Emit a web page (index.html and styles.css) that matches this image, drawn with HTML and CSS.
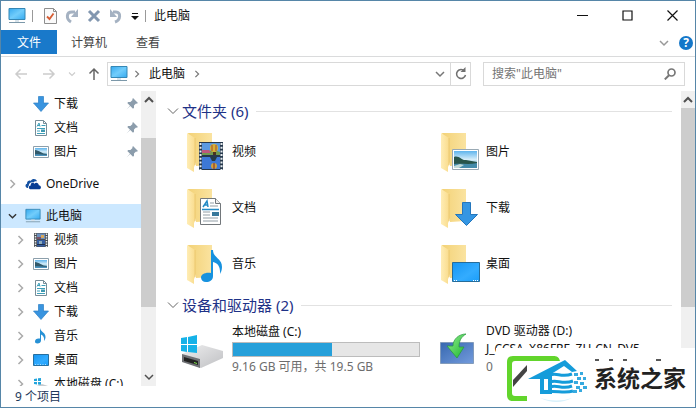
FILE: index.html
```html
<!DOCTYPE html>
<html lang="zh-CN">
<head>
<meta charset="utf-8">
<title>此电脑</title>
<link rel="stylesheet" href="styles.css">
</head>
<body>
<svg class="defs" aria-hidden="true">
  <defs>
    <linearGradient id="screen" x1="0" y1="0" x2="1" y2="1"><stop offset="0" stop-color="#35a9ef"/><stop offset=".5" stop-color="#72cdfb"/><stop offset="1" stop-color="#35aaf0"/></linearGradient>
    <linearGradient id="desk" x1="0" y1="0" x2="1" y2="1"><stop offset="0" stop-color="#1596f3"/><stop offset=".6" stop-color="#33acff"/><stop offset="1" stop-color="#1a9dfa"/></linearGradient>
    <linearGradient id="fold" x1="0" y1="0" x2="1" y2="0"><stop offset="0" stop-color="#f3d277"/><stop offset="1" stop-color="#fae3a0"/></linearGradient>
    <linearGradient id="flap" x1="0" y1="0" x2="1" y2="0"><stop offset="0" stop-color="#ffedb5"/><stop offset="1" stop-color="#f9dc8d"/></linearGradient>
    <linearGradient id="sky" x1="0" y1="0" x2="0" y2="1"><stop offset="0" stop-color="#5fb4ec"/><stop offset=".5" stop-color="#d5edf9"/><stop offset="1" stop-color="#3d94b8"/></linearGradient>
    <linearGradient id="disc" x1="0" y1="0" x2="1" y2="1"><stop offset="0" stop-color="#3768b0"/><stop offset="1" stop-color="#739bdc"/></linearGradient>
    <linearGradient id="green" x1="0" y1="0" x2="1" y2="1"><stop offset="0" stop-color="#98ee91"/><stop offset="1" stop-color="#18b62d"/></linearGradient>
    <linearGradient id="metal" x1="0" y1="0" x2="1" y2="1"><stop offset="0" stop-color="#eeeeef"/><stop offset="1" stop-color="#bfc0c3"/></linearGradient>
  </defs>
  <symbol id="pc" viewBox="0 0 18 16"><path d="M1 .5h16v11H1z" fill="url(#screen)" stroke="#3587b5"/><path d="M7 12h4v2H7z" fill="#d7e3eb"/><path d="M1 14.5h16" stroke="#7c98a9"/></symbol>
  <symbol id="down" viewBox="0 0 16 16"><path d="M5.5.5h5V7h5L8 15.5.5 7h5z" fill="#3994df" stroke="#2b7fc6" stroke-width=".7"/></symbol>
  <symbol id="doc" viewBox="0 0 16 16"><path d="M2.5.5h8l3 3v12h-11z" fill="#fff" stroke="#778d98"/><path d="M10.5.5v3h3" fill="none" stroke="#778d98"/><path d="M4 6.5L6 3l1 3.500M4.500 5.500H7M8.500 5.500h4M4 8.500h8M4 11h3M4 13.500h8" fill="none" stroke="#3d9fba"/><path d="M8 9.500h4v2.500H8z" fill="#3f98b0"/></symbol>
  <symbol id="pic" viewBox="0 0 16 16"><path d="M.5 2.500h15v11H.5z" fill="#fff" stroke="#8c9fab"/><path d="M2 4h12v8H2z" fill="url(#sky)"/><path d="M2 6c4 0 7 4 12 4v2H2z" fill="#31596a"/><path d="M2 10.500c4-1 8 1 12 0V12H2z" fill="#4a92bd"/></symbol>
  <symbol id="film" viewBox="0 0 16 16"><path d="M1 1h14v14H1z" fill="#4b4f55"/><path d="M4 1.500h8V7H4z" fill="#6c8fbd"/><path d="M4 8h8v6.500H4z" fill="#355da0"/><path d="M2.500 1.500v14M13.500 1.500v14" stroke="#e6eaec" stroke-width="1.500" stroke-dasharray="1.500 1"/><path d="M8 3h3v3H8z" fill="#d6a85d"/><path d="M4 5h4v2H4z" fill="#7c5267"/><path d="M6 9h3v3H6z" fill="#8babbd"/><path d="M4 12h8v1H4z" fill="#1c304f"/></symbol>
  <symbol id="note" viewBox="0 0 16 16"><path d="M7 0c.5 4 6 4.500 5.500 9.500-.2 1.500-.7 2.500-1.500 3.500.6-3-.5-5.500-3-6.500v6c0 2-1.600 3-3.500 3S2 14.500 2 13.200s1.500-2.700 3.500-2.700H7z" fill="#2791d5"/></symbol>
  <symbol id="desktop" viewBox="0 0 16 16"><path d="M.5 2.500h15v11H.5z" fill="url(#desk)" stroke="#276f9f"/><path d="M2 12.500h12" stroke="#a8dcff" stroke-dasharray="1 1.500"/></symbol>
  <symbol id="cloud" viewBox="0 0 18 14"><path d="M3.500 11.500H3C.2 11.500-.4 7.500 2.300 6.700 2 3.700 5 2.500 6.500 3.500 8 .5 12.500.5 13.500 4c-1.500-.5-3-.1-4 1.200C6.500 4.200 3.900 6.500 4.300 9c-.8.6-1.100 1.500-.8 2.500z" fill="#1451a2"/><path d="M7 13c-3.500 0-3.500-4-.6-4.200C6 5.500 9.500 4.800 10.500 6.700c2-2.200 5.100-.7 5 1.800C19 9 18.500 13 15.500 13z" fill="#073d94"/></symbol>
  <symbol id="win-disk" viewBox="0 0 16 16"><path d="M1 3l3-.5V5H1zM5 2.300L8 2v3H5zM1 6h3v2.500L1 8zM5 6h3v3l-3-.4z" fill="#24a5dc"/><path d="M1 11l8-3 6 2v4l-7 2-7-3z" fill="#c7cbcf"/></symbol>
  <symbol id="pin" viewBox="0 0 12 12"><path d="M7 0l5 5-1.300.7-.7-.2L8 7.600v2.200l-1 .9L4.300 8 .5 11.500 4 7.700 1.300 5l.9-1h2.200l2.100-2-.2-.7z" fill="#8c9dac"/></symbol>
  <symbol id="right" viewBox="0 0 8 10"><path d="M2 1l4 4-4 4" fill="none" stroke="currentColor" stroke-width="1.500"/></symbol>
  <symbol id="chev-down" viewBox="0 0 10 8"><path d="M1 2l4 4 4-4" fill="none" stroke="currentColor" stroke-width="1.500"/></symbol>
  <symbol id="chev-up" viewBox="0 0 10 8"><path d="M1 6l4-4 4 4" fill="none" stroke="currentColor" stroke-width="2"/></symbol>
  <symbol id="thin-down" viewBox="0 0 12 8"><path d="M1 1.500l5 5 5-5" fill="none" stroke="currentColor" stroke-width="1"/></symbol>
  <symbol id="arrow" viewBox="0 0 14 12"><path d="M13 6H2M6.500 1.500L2 6l4.500 4.500" fill="none" stroke="currentColor" stroke-width="1.500"/></symbol>
  <symbol id="folder" viewBox="0 0 40 40"><path d="M2 1h24v32l-16 1z" fill="url(#fold)"/><path d="M1 1l8 5v27l-1 2v5l-7-4z" fill="url(#flap)"/><path d="M9 6v27" stroke="#e4bd60" stroke-width=".6"/></symbol>
</svg>

<div class="window">
  <header class="titlebar">
    <svg class="i18" aria-hidden="true"><use href="#pc"/></svg>
    <span class="divider"></span>
    <div class="quick">
      <button aria-label="属性"><svg viewBox="0 0 14 16"><path d="M1.500.5h9l3 3v12h-12z" fill="#fafafa" stroke="#8e8e8e"/><path d="M10.500.5v3h3" fill="none" stroke="#8e8e8e"/><path d="M4 8.500l2.500 2.500L10.500 5.500" fill="none" stroke="#d65d34" stroke-width="1.800"/></svg></button>
      <button aria-label="恢复"><svg viewBox="0 0 14 16"><path d="M6 14C1 11 1 4 7 4h3" fill="none" stroke="#a5b2c2" stroke-width="3"/><path d="M13 1v8H6z" fill="#a5b2c2"/></svg></button>
      <button aria-label="删除"><svg viewBox="0 0 14 16"><path d="M2 3l10 10M12 3L2 13" stroke="#8297b0" stroke-width="3"/></svg></button>
      <button aria-label="撤消"><svg viewBox="0 0 14 16"><path d="M6 14c6-2 6-10 1-10H4" fill="none" stroke="#a5b2c2" stroke-width="3"/><path d="M1 1v8h7z" fill="#a5b2c2"/></svg></button>
      <button class="more" aria-label="自定义快速访问工具栏"><svg viewBox="0 0 8 8"><path d="M1 1.500h6" stroke="#111"/><path d="M0 4h8L4 8z" fill="#111"/></svg></button>
    </div>
    <span class="divider"></span>
    <h1>此电脑</h1>
    <div class="controls">
      <button aria-label="最小化"><svg viewBox="0 0 11 11"><path d="M0 5.500h11" stroke="#111"/></svg></button>
      <button aria-label="最大化"><svg viewBox="0 0 11 11"><path d="M1 1h9v9H1z" fill="none" stroke="#111" stroke-width="1.200"/></svg></button>
      <button aria-label="关闭"><svg viewBox="0 0 11 11"><path d="M.5.5l10 10M10.500.5l-10 10" stroke="#111" stroke-width="1.200"/></svg></button>
    </div>
  </header>

  <div class="ribbon">
    <button class="tab active">文件</button>
    <button class="tab">计算机</button>
    <button class="tab">查看</button>
    <div class="ribbon-end">
      <button class="pale" aria-label="展开功能区"><svg class="i10" ><use href="#chev-down"/></svg></button>
      <button class="help" aria-label="帮助">?</button>
    </div>
  </div>

  <div class="address-row">
    <div class="history">
      <button aria-label="后退"><svg class="i14"><use href="#arrow"/></svg></button>
      <button aria-label="前进"><svg class="i14 flip"><use href="#arrow"/></svg></button>
      <button aria-label="最近浏览"><svg class="i8"><use href="#chev-down"/></svg></button>
      <button class="up" aria-label="向上"><svg class="i14"><use href="#arrow"/></svg></button>
    </div>
    <div class="address">
      <svg class="i18" aria-hidden="true"><use href="#pc"/></svg>
      <svg class="sep" aria-hidden="true"><use href="#right"/></svg>
      <a href="#">此电脑</a>
      <svg class="sep" aria-hidden="true"><use href="#right"/></svg>
      <button class="drop" aria-label="以前的位置"><svg class="i10"><use href="#chev-down"/></svg></button>
      <button class="refresh" aria-label="刷新"><svg viewBox="0 0 14 14"><path d="M10.500 4A4.500 4.500 0 1 0 11.500 8" fill="none" stroke="#707070" stroke-width="1.500"/><path d="M11.500 0v5h-5z" fill="#707070"/></svg></button>
    </div>
    <div class="search">
      <input type="text" aria-label="搜索" placeholder='搜索"此电脑"'>
      <svg viewBox="0 0 12 12" aria-hidden="true"><circle cx="7.500" cy="4.500" r="3.500" fill="none" stroke="#777" stroke-width="1.700"/><path d="M5 7.200L.8 11.400" stroke="#777" stroke-width="2"/></svg>
    </div>
  </div>

  <div class="body">
    <nav class="side">
      <div class="tree">
        <a class="node child" href="#"><svg class="i16"><use href="#down"/></svg>下载<svg class="pin"><use href="#pin"/></svg></a>
        <a class="node child" href="#"><svg class="i16"><use href="#doc"/></svg>文档<svg class="pin"><use href="#pin"/></svg></a>
        <a class="node child" href="#"><svg class="i16"><use href="#pic"/></svg>图片<svg class="pin"><use href="#pin"/></svg></a>
        <a class="node root" href="#"><svg class="exp"><use href="#right"/></svg><svg class="i16"><use href="#cloud"/></svg>OneDrive</a>
        <a class="node root selected" href="#"><svg class="exp"><use href="#chev-down"/></svg><svg class="i16"><use href="#pc"/></svg>此电脑</a>
        <a class="node child" href="#"><svg class="exp"><use href="#right"/></svg><svg class="i16"><use href="#film"/></svg>视频</a>
        <a class="node child" href="#"><svg class="exp"><use href="#right"/></svg><svg class="i16"><use href="#pic"/></svg>图片</a>
        <a class="node child" href="#"><svg class="exp"><use href="#right"/></svg><svg class="i16"><use href="#doc"/></svg>文档</a>
        <a class="node child" href="#"><svg class="exp"><use href="#right"/></svg><svg class="i16"><use href="#down"/></svg>下载</a>
        <a class="node child" href="#"><svg class="exp"><use href="#right"/></svg><svg class="i16"><use href="#note"/></svg>音乐</a>
        <a class="node child" href="#"><svg class="exp"><use href="#right"/></svg><svg class="i16"><use href="#desktop"/></svg>桌面</a>
        <a class="node child" href="#"><svg class="exp"><use href="#right"/></svg><svg class="i16"><use href="#win-disk"/></svg>本地磁盘 (C:)</a>
      </div>
      <div class="scroll" aria-hidden="true"><svg class="i10"><use href="#chev-up"/></svg><div class="track low"><div class="thumb"></div></div><svg class="i10"><use href="#chev-down"/></svg></div>
    </nav>

    <main>
      <section>
        <h2><svg aria-hidden="true"><use href="#thin-down"/></svg>文件夹 (6)</h2>
        <div class="items">
          <a class="item" href="#"><svg viewBox="0 0 40 40"><use href="#folder"/><path d="M13 10h24v28H13z" fill="#26384c"/><path d="M16 11h18v12H16z" fill="#5b99e0"/><path d="M16 25h18v12H16z" fill="#3d78d6"/><path d="M16 19c5-3 9 2 12-1l6 2v3H16z" fill="#6f9a50"/><path d="M16 18h7l2 3h-9z" fill="#bc587d"/><circle cx="28" cy="16" r="4" fill="#d8b136"/><path d="M26 13v6M30 13v6" stroke="#a04a33"/><path d="M27 20h3v3h-3z" fill="#4a3320"/><path d="M24 25h7l-2 4h-3z" fill="#243a45"/><circle cx="28" cy="34" r="3" fill="#d0a03c"/><path d="M28 31v6" stroke="#7a2534"/><path d="M14.500 11v27M35.500 11v27" stroke="#e8edf1" stroke-width="2" stroke-dasharray="2 1.700"/></svg><span>视频</span></a>
          <a class="item" href="#"><svg viewBox="0 0 40 40"><use href="#folder"/><path d="M12.500 17.500h26v20h-26z" fill="#fff" stroke="#99a9b4"/><path d="M14 19h23v17H14z" fill="url(#sky)"/><path d="M14 25c5-2 8 4 12 3l11 2v2H14z" fill="#28554b"/><path d="M14 32c7-1 15 1 23-1v5H14z" fill="#448baa"/><path d="M14 34l6-2 4 1-5 3h-5z" fill="#c0dad9"/></svg><span>图片</span></a>
          <a class="item" href="#"><svg viewBox="0 0 40 40"><use href="#folder"/><path d="M14.500 10.500h15l5 5v21h-20z" fill="#fff" stroke="#72777b"/><path d="M29.500 10.500v5h5" fill="#eee" stroke="#72777b"/><path d="M17 19l4-6 1 6M18 17h4M16 21.500h17" fill="none" stroke="#258bc5" stroke-width="1.500"/><path d="M24 15h4M24 18h8M17 24h7M17 27h7M17 30h15M17 33h15" stroke="#919da5"/><path d="M26 24h7v4h-7z" fill="#37789b"/></svg><span>文档</span></a>
          <a class="item" href="#"><svg viewBox="0 0 40 40"><use href="#folder"/><path d="M22.500 14.500h8v12h7L26.500 37.500l-11-11h7z" fill="#3496e3" stroke="#2476bc"/></svg><span>下载</span></a>
          <a class="item" href="#"><svg viewBox="0 0 40 40"><use href="#folder"/><path d="M25 6h2c0 8 9 8 9 17 0 3-1 5-2 7 .5-7-2-11-7-12v14c0 4-3 6-7 6-3 0-5-2-5-4.500 0-3 4-5.500 10-4.500z" fill="#1792df"/></svg><span>音乐</span></a>
          <a class="item" href="#"><svg viewBox="0 0 40 40"><use href="#folder"/><path d="M12.500 18.500h27v19h-27z" fill="url(#desk)" stroke="#266c99"/><path d="M14 36.500h3M33 36.500h5" stroke="#fff" stroke-dasharray="1 1"/></svg><span>桌面</span></a>
        </div>
      </section>
      <section>
        <h2><svg aria-hidden="true"><use href="#thin-down"/></svg>设备和驱动器 (2)</h2>
        <div class="items drives">
          <a class="item disk" href="#"><svg viewBox="0 0 46 40"><path d="M2 25l20-9 21 6v7L21 39 2 32z" fill="url(#metal)"/><path d="M2 25l18 5v9L2 33z" fill="#6f7175"/><path d="M4 28l14 4v4L4 32z" fill="#222"/><path d="M14 33l3 1v1l-3-1z" fill="#7be249"/><path d="M1 9l6-1v7H1zM8 8l9-2v9H8zM1 16h6v7l-6-1zM8 16h9v8l-9-1z" fill="#16b2e8"/></svg>
            <span class="info"><span>本地磁盘 (C:)</span><progress value="53" max="100" aria-label="已用空间"></progress><span class="muted">9.16 GB 可用，共 19.5 GB</span></span></a>
          <a class="item" href="#"><svg viewBox="0 0 40 40"><path d="M.5 13.500h33v21H.5z" fill="url(#disc)" stroke="#829bbb"/><path d="M26 5c-7 0-13 5-13 12H7l10 12 7-11h-5c0-6 2-10 7-13z" fill="url(#green)" stroke="#25983b" stroke-width=".7"/></svg>
            <span class="info"><span>DVD 驱动器 (D:)</span><span>J_CCSA_X86FRE_ZH-CN_DV5</span><span class="muted">0 字节</span></span></a>
        </div>
      </section>
    </main>
    <div class="scroll content-scroll" aria-hidden="true"><svg class="i10"><use href="#chev-up"/></svg><div class="track"><div class="thumb"></div></div></div>
  </div>
  <footer>9 个项目</footer>
  <div class="brand">
    <svg viewBox="0 0 94 60" aria-hidden="true">
      <path d="M31 17v6L17 39v-7z" fill="#444"/>
      <path d="M64 13c-1-4-3-5-7-5H17c-4 0-6 2-6 6v33c0 4 2 6 6 6h14v-5H19q-3 0-3-3V16q0-3 3-3z" fill="#62d52c"/>
      <path d="M32 31L69 12l12 11-5 1-8-6-16 10v3h-4v11h4v4h-8V31z" fill="#159cda"/>
      <path d="M52 24h4v22h-4z" fill="#159cda"/>
      <path d="M54 27c7-3 11 3 22-1M54 34c7-3 12 3 23-1M54 39c7-3 12 3 22-1M50 44c10-2 18 2 27-1" fill="none" stroke="#159cda" stroke-width="3"/>
      <path d="M78 25h4v3h-4zM84 24h3v3h-3zM81 29h4v3h-4zM87 29h3v3h-3zM78 33h4v3h-4zM84 34h4v3h-4zM80 38h4v3h-4zM87 38h4v3h-4zM77 42h4v3h-4zM83 41h3v3h-3z" fill="#36aadf"/>
      <path d="M44 50q17 5 32 0-15 8-32 0z" fill="#d8f1fb"/>
    </svg>
    <span>系统之家</span>
    <svg class="specks" viewBox="0 0 80 4" aria-hidden="true"><path d="M3 2h4M17 2h4M31 2h4M64 2h5" stroke="#222" stroke-width="1.500"/></svg>
  </div>
</div>
</body>
</html>
```

FILE: styles.css
```css
* { box-sizing: border-box; }

body {
  margin: 0;
  background: #fff;
  color: #111;
  font: 12px/16px "Noto Sans", "Noto Sans CJK SC", sans-serif;
}

button {
  display: flex;
  align-items: center;
  justify-content: center;
  margin: 0;
  padding: 0;
  border: 0;
  background: none;
  color: inherit;
  font: inherit;
}

a { color: inherit; text-decoration: none; }
svg { display: block; flex: none; }
.defs { position: absolute; width: 0; height: 0; }

.i8 { width: 8px; height: 6px; }
.i10 { width: 10px; height: 8px; }
.i14 { width: 14px; height: 12px; }
.i16 { width: 16px; height: 16px; }
.i18 { width: 18px; height: 16px; }

.window {
  position: relative;
  display: flex;
  flex-direction: column;
  height: 100vh;
  border: 1px solid #5686a8;
  overflow: hidden;
}

/* Title bar */
.titlebar {
  display: flex;
  align-items: center;
  height: 29px;
  padding-left: 7px;
  flex: none;
}
.divider { width: 1px; height: 12px; margin: 0 6px; background: #999; }
.quick { display: flex; align-items: center; gap: 8px; padding-left: 4px; }
.quick svg { width: 14px; height: 16px; }
.quick .more svg { width: 8px; height: 8px; }
.quick + .divider { margin-right: 8px; }
h1 { margin: 0; font-size: 12px; font-weight: 400; }
.controls { display: flex; margin-left: auto; }
.controls button { width: 45px; height: 28px; }
.controls svg { width: 11px; height: 11px; }

/* Ribbon tabs */
.ribbon {
  display: flex;
  height: 27px;
  border-bottom: 1px solid #dadbdc;
  flex: none;
}
.tab { height: 24px; padding: 2px 14px 0; color: #444; }
.tab.active { width: 56px; background: #1979ca; color: #fff; }
.tab + .tab + .tab { padding: 2px 15px 0; }
.ribbon-end { display: flex; align-items: center; gap: 10px; margin-left: auto; padding-right: 2px; }
.pale { color: #999; }
.help { width: 14px; height: 14px; border-radius: 50%; background: #1477c9; color: #fff; font-weight: 700; }

/* Navigation row */
.address-row {
  display: flex;
  align-items: center;
  height: 34px;
  padding: 0 10px 0 13px;
  flex: none;
}
.history { display: flex; align-items: center; gap: 14px; width: 93px; color: #ccc; }
.history button:nth-child(3) { margin-left: -2px; }
.history .up { margin-left: -3px; color: #666; }
.up svg { transform: rotate(90deg); }
.flip { transform: scaleX(-1); }
.address {
  display: flex;
  align-items: center;
  flex: 1;
  height: 24px;
  padding-left: 2px;
  border: 1px solid #d9d9d9;
}
.address a { margin: 0 3px; }
.sep { width: 8px; height: 8px; margin: 0 5px; color: #777; }
.drop { width: 20px; height: 22px; margin-left: auto; color: #777; }
.refresh { width: 20px; height: 22px; border-left: 1px solid #d9d9d9; }
.refresh svg { width: 14px; height: 14px; }
.search {
  display: flex;
  align-items: center;
  width: 202px;
  height: 24px;
  margin-left: 12px;
  padding: 0 8px;
  border: 1px solid #d9d9d9;
}
.search input { flex: 1; min-width: 0; padding: 0; border: 0; outline: 0; font: inherit; }
.search input::placeholder { color: #757575; }
.search svg { width: 12px; height: 12px; }

/* Body */
.body { display: flex; flex: 1; min-height: 0; }
.side { display: flex; width: 155px; flex: none; }
.tree { flex: 1; min-width: 0; padding-top: 1px; overflow: hidden; }
.node {
  display: flex;
  align-items: center;
  height: 24px;
  padding-right: 3px;
  gap: 5px;
  white-space: nowrap;
}
.node.child { padding-left: 32px; }
.node.root { margin: 8px 0 0; padding-left: 7px; }
.node .exp { width: 9px; height: 10px; color: #aaa; }
.root .exp { margin-right: 3px; }
.child .exp { margin: 0 3px 0 -17px; }
.node.selected { background: #cce8ff; }
.selected .exp { color: #333; }
.pin { width: 12px; height: 12px; margin-left: auto; }

.scroll {
  display: flex;
  flex-direction: column;
  align-items: center;
  width: 15px;
  padding: 5px 0;
  background: #f0f0f0;
  color: #505050;
  flex: none;
}
.track { flex: 1; width: 100%; padding-top: 4px; }
.thumb { height: 73%; background: #cdcdcd; }
.track.low { padding-top: 34px; }
.low .thumb { height: 72%; }
.content-scroll { width: 14px; }

main { flex: 1; min-width: 0; padding: 10px 0 0 11px; overflow: hidden; }
h2 {
  display: flex;
  align-items: center;
  margin: 0 9px 0 0;
  font-size: 15px;
  line-height: 20px;
  font-weight: 400;
  color: #1e3287;
}
h2 svg { width: 12px; height: 8px; margin-right: 3px; color: #666; }
h2::after { content: ""; flex: 1; height: 1px; margin-left: 8px; background: #e2e2e2; }
.items {
  display: grid;
  grid-template-columns: repeat(2, minmax(0, 1fr));
  gap: 16px 13px;
  padding: 11px 0 11px 19px;
}
.item { display: flex; align-items: center; min-width: 0; }
.item > svg { width: 40px; height: 40px; margin-right: 6px; }
.item.disk > svg { width: 46px; margin-left: -6px; }
.items.drives { padding-top: 8px; }
.info { display: flex; flex-direction: column; flex: 1; min-width: 0; gap: 2px; white-space: nowrap; }
.muted { color: #6d6d6d; }
progress {
  appearance: none;
  width: 100%;
  max-width: 188px;
  height: 15px;
  border: 1px solid #bcbcbc;
}
progress::-webkit-progress-bar { background: #e6e6e6; }
progress::-webkit-progress-value { background: #26a0da; }

footer { height: 21px; padding: 3px 14px 0; color: #1e395b; flex: none; }

/* Corner badge laid over the window */
.brand {
  position: absolute;
  right: -1px;
  bottom: -1px;
  display: flex;
  align-items: center;
  width: 200px;
  height: 60px;
  background: #fff;
  color: #222;
  font-size: 23px;
  line-height: 32px;
  font-weight: 700;
}
.brand > svg { width: 94px; height: 60px; }
.brand span { margin-left: 4px; white-space: nowrap; }
.brand .specks { position: absolute; top: 10px; right: 24px; width: 80px; height: 4px; }
```
